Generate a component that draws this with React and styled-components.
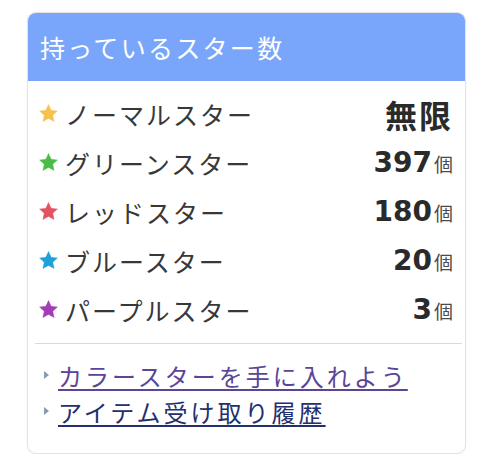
import React from 'react'
import styled, { createGlobalStyle } from 'styled-components'

const GlobalStyle = createGlobalStyle`
  html, body {
    margin: 0;
    padding: 0;
    background: #ffffff;
    font-family: "Noto Sans CJK JP", "Noto Sans", sans-serif;
  }
`

const Page = styled.div`
  padding: 12px 0 0 27px;
`

const Card = styled.div`
  width: 437px;
  border: 1px solid #e3e3e6;
  border-radius: 9px;
  overflow: hidden;
  background: #fff;
  box-shadow: 0 1px 2px rgba(0, 0, 0, 0.05);
`

const Header = styled.div`
  height: 68px;
  background: #79a6fa;
  color: #fff;
  display: flex;
  align-items: center;
  padding-left: 12px;
  font-size: 25px;
  letter-spacing: 2.3px;
`

const Body = styled.div`
  padding: 8px 12px 0 10px;
`

const Row = styled.div`
  height: 49px;
  display: flex;
  align-items: center;
`

const Star = styled.svg`
  width: 21px;
  height: 21px;
  flex: none;
  margin-right: 6px;
`

const Label = styled.span`
  flex: 1;
  font-size: 25px;
  color: #383838;
  letter-spacing: 2px;
`

const Value = styled.span`
  display: flex;
  align-items: baseline;
  font-family: "DejaVu Sans", sans-serif;
  font-weight: bold;
  font-size: 28px;
  color: #2a2a2a;
`

const Word = styled.span`
  font-family: "Noto Sans CJK JP", sans-serif;
  font-weight: bold;
  font-size: 32px;
  letter-spacing: 2px;
`

const Unit = styled.span`
  font-family: "Noto Sans CJK JP", sans-serif;
  font-weight: normal;
  font-size: 19px;
  color: #4a4a4a;
  margin-left: 2px;
`

const Divider = styled.div`
  height: 1px;
  background: #dadada;
  margin: 9px -9px 0 -3px;
`

const Links = styled.div`
  padding: 13px 0 24px 6px;
`

const LinkRow = styled.div`
  height: 36px;
  display: flex;
  align-items: center;
`

const Arrow = styled.span`
  width: 0;
  height: 0;
  border-top: 4px solid transparent;
  border-bottom: 4px solid transparent;
  border-left: 5px solid #8a9ab0;
  margin-right: 9px;
  flex: none;
`

const Link = styled.a`
  font-size: 24px;
  letter-spacing: 3px;
  color: ${p => (p.$visited ? '#5b4596' : '#24306e')};
  text-decoration: underline;
  text-underline-offset: 3px;
`

const StarIcon = ({ color }) => (
  <Star viewBox="0 0 24 24">
    <path
      d="M12 1.8l3.1 6.6 7.1.8-5.3 4.9 1.5 7.1L12 17.6l-6.4 3.6 1.5-7.1L1.8 9.2l7.1-.8z"
      fill={color}
      stroke={color}
      strokeOpacity="0.6"
      strokeWidth="0.8"
      strokeLinejoin="round"
    />
  </Star>
)

const stars = [
  { name: 'ノーマルスター', color: '#f5c24e', value: '無限' },
  { name: 'グリーンスター', color: '#4dbb4a', value: '397' },
  { name: 'レッドスター', color: '#e2535f', value: '180' },
  { name: 'ブルースター', color: '#1fa0d6', value: '20' },
  { name: 'パープルスター', color: '#a43cb8', value: '3' },
]

export default function App() {
  return (
    <Page>
      <GlobalStyle />
      <Card>
        <Header>持っているスター数</Header>
        <Body>
          {stars.map(s => (
            <Row key={s.name}>
              <StarIcon color={s.color} />
              <Label>{s.name}</Label>
              <Value>
                {s.value === '無限' ? (
                  <Word>{s.value}</Word>
                ) : (
                  <>
                    {s.value}
                    <Unit>個</Unit>
                  </>
                )}
              </Value>
            </Row>
          ))}
          <Divider />
          <Links>
            <LinkRow>
              <Arrow />
              <Link href="#" $visited>カラースターを手に入れよう</Link>
            </LinkRow>
            <LinkRow>
              <Arrow />
              <Link href="#">アイテム受け取り履歴</Link>
            </LinkRow>
          </Links>
        </Body>
      </Card>
    </Page>
  )
}
